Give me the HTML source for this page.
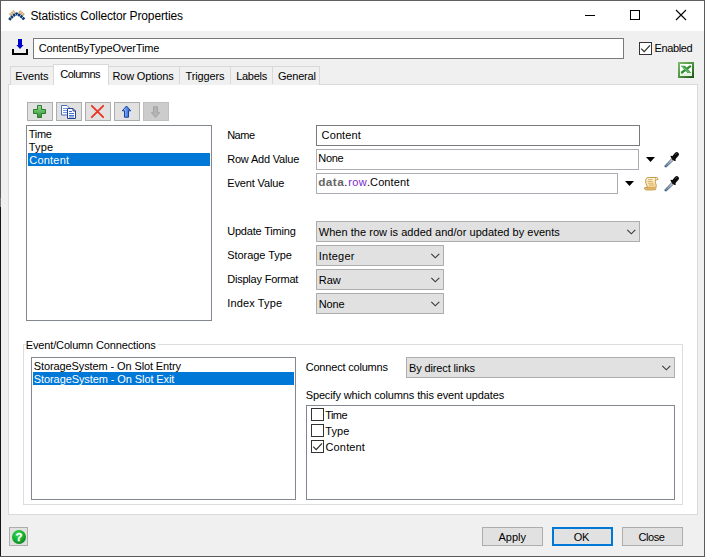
<!DOCTYPE html>
<html><head><meta charset="utf-8"><title>Statistics Collector Properties</title>
<style>
html,body{margin:0;padding:0;}
body{width:705px;height:557px;position:relative;overflow:hidden;background:#f0f0f0;font-family:"Liberation Sans",sans-serif;font-size:11px;color:#000;}
.a{position:absolute;box-sizing:border-box;}
svg{position:absolute;overflow:visible;}
.t{position:absolute;white-space:nowrap;line-height:14px;height:14px;}
.btn{position:absolute;box-sizing:border-box;border:1px solid #adadad;background:#e1e1e1;}
.inp{position:absolute;box-sizing:border-box;border:1px solid #7a7a7a;background:#fff;}
.cmb{position:absolute;box-sizing:border-box;border:1px solid #adadad;background:#e1e1e1;height:21px;}
.cb{position:absolute;box-sizing:border-box;width:13px;height:13px;border:1px solid #333;background:#fff;}
</style></head><body>
<!-- window frame -->
<div class="a" id="titlebar" style="left:1px;top:1px;width:703px;height:30px;background:#fff;"></div>
<div class="a" style="left:0;top:0;width:705px;height:1px;background:#606060;"></div>
<div class="a" style="left:0;top:0;width:1px;height:557px;background:linear-gradient(to bottom,#5a5a5a 0,#5a5a5a 198px,#7a7a7a 198px,#7a7a7a 207px,#161616 207px,#161616 557px);"></div>
<div class="a" style="left:704px;top:0;width:1px;height:557px;background:#5a5a5a;"></div>
<div class="a" style="left:0;top:556px;width:705px;height:1px;background:#5a5a5a;"></div>

<!-- app icon -->
<svg style="left:8px;top:9.7px;" width="18" height="12" viewBox="0 0 18 12">
 <path d="M2 5.2 L6.4 1.2 M15.8 5.2 L11.2 1.2" stroke="#cfab78" stroke-width="3.2" stroke-dasharray="1.8 0.5" fill="none"/>
 <path d="M1.3 9.9 Q4.6 5.6 8.7 3.8 Q12.9 5.6 16.5 9.7" stroke="#0b3a72" stroke-width="2.8" stroke-dasharray="2.3 0.5" fill="none" stroke-linejoin="miter"/>
</svg>
<span class="t" id="title" style="left:30.5px;top:9px;font-size:12px;letter-spacing:-0.14px;">Statistics Collector Properties</span>
<!-- window controls -->
<div class="a" style="left:585px;top:15px;width:10px;height:1px;background:#000;"></div>
<div class="a" style="left:630px;top:10px;width:10px;height:10px;border:1px solid #000;"></div>
<svg style="left:676px;top:10px;" width="10" height="10" viewBox="0 0 10 10"><path d="M0 0 L10 10 M10 0 L0 10" stroke="#000" stroke-width="1.1" fill="none"/></svg>

<!-- name row -->
<svg style="left:12px;top:38px;" width="17" height="18" viewBox="0 0 17 18">
 <path d="M1 11 V16 H15 V11" stroke="#000" stroke-width="2" fill="none"/>
 <path d="M6 1 H10 V7 H11.6 L8 11 L4.4 7 H6 Z" fill="#0000c8"/>
</svg>
<div class="inp" style="left:33px;top:38px;width:591px;height:21px;"></div>
<span class="t" id="cname" style="left:38.8px;top:41px;letter-spacing:-0.12px;">ContentByTypeOverTime</span>
<div class="cb" style="left:639px;top:42px;"></div>
<svg style="left:639px;top:42px;" width="13" height="13" viewBox="0 0 13 13"><path d="M2.2 6.6 L5.2 9.6 L11 3.4" stroke="#2a2a2a" stroke-width="1.15" fill="none"/></svg>
<span class="t" id="enabled" style="left:654.5px;top:41px;letter-spacing:-0.38px;">Enabled</span>
<!-- excel icon -->
<svg style="left:678px;top:62px;" width="16" height="16" viewBox="0 0 16 16">
 <defs><linearGradient id="gx" x1="0" y1="0" x2="1" y2="1"><stop offset="0" stop-color="#7fb86a"/><stop offset="0.5" stop-color="#4c9440"/><stop offset="1" stop-color="#1f5a1c"/></linearGradient></defs>
 <rect x="1" y="1" width="14" height="14" fill="#fff" stroke="url(#gx)" stroke-width="2"/>
 <rect x="2.2" y="11.4" width="11.6" height="2.2" fill="#dff0da"/>
 <path d="M12.8 3.8 L3.2 11" stroke="#2f8a32" stroke-width="2.2" fill="none"/>
 <path d="M2.8 3.8 L7 3.8 L13.4 11 L9.4 11 Z" fill="#3fa045"/>
 <path d="M3.6 4.2 L11.6 10.8" stroke="#8fd08f" stroke-width="0.7" fill="none"/>
</svg>

<!-- tabs -->
<div class="a" style="left:8px;top:84px;width:690px;height:431px;background:#fff;border:1px solid #dadada;"></div>
<div class="a" style="left:10px;top:66px;width:310px;height:19px;background:#f0f0f0;border:1px solid #d9d9d9;border-bottom:none;"></div>
<div class="a" style="left:179px;top:67px;width:1px;height:17px;background:#d9d9d9;"></div>
<div class="a" style="left:230px;top:67px;width:1px;height:17px;background:#d9d9d9;"></div>
<div class="a" style="left:272px;top:67px;width:1px;height:17px;background:#d9d9d9;"></div>
<div class="a" style="left:53px;top:64px;width:56px;height:21px;background:#fff;border:1px solid #d9d9d9;border-bottom:none;"></div>
<span class="t" id="tab1" style="left:15.2px;top:69px;letter-spacing:-0.06px;">Events</span>
<span class="t" id="tab2" style="left:60.2px;top:67px;letter-spacing:-0.5px;">Columns</span>
<span class="t" id="tab3" style="left:112.5px;top:69px;letter-spacing:-0.18px;">Row Options</span>
<span class="t" id="tab4" style="left:185.5px;top:69px;letter-spacing:-0.12px;">Triggers</span>
<span class="t" id="tab5" style="left:236.2px;top:69px;letter-spacing:-0.28px;">Labels</span>
<span class="t" id="tab6" style="left:278px;top:69px;letter-spacing:-0.2px;">General</span>

<!-- toolbar buttons -->
<div class="btn" style="left:27px;top:102px;width:26px;height:19px;"></div>
<svg style="left:33px;top:105px;" width="14" height="14" viewBox="0 0 14 14">
 <defs><linearGradient id="gp" x1="0" y1="0" x2="0" y2="1"><stop offset="0" stop-color="#a4dba0"/><stop offset="0.5" stop-color="#5cb85c"/><stop offset="1" stop-color="#2f8f36"/></linearGradient></defs>
 <path d="M4.5 0.5 H8.5 V4.5 H12.5 V8.5 H8.5 V12.5 H4.5 V8.5 H0.5 V4.5 H4.5 Z" fill="url(#gp)" stroke="#2c7a30" stroke-width="1" stroke-linejoin="round"/>
</svg>
<div class="btn" style="left:56px;top:102px;width:26px;height:19px;"></div>
<svg style="left:61px;top:105px;" width="16" height="14" viewBox="0 0 16 14">
 <path d="M0.5 0.5 H6 L8.5 3 V10 H0.5 Z" fill="#fff" stroke="#4a6fb5"/>
 <path d="M2 3.5 H6 M2 5.5 H7 M2 7.5 H7" stroke="#6f9be0" stroke-width="1"/>
 <path d="M6.5 3.5 H12 L14.5 6 V13.5 H6.5 Z" fill="#fff" stroke="#27408b"/>
 <path d="M12 3.5 V6 H14.5" fill="none" stroke="#27408b"/>
 <path d="M8 6.5 H11 M8 8.5 H13 M8 10.5 H13 M8 12 H13" stroke="#3f6fd0" stroke-width="1"/>
</svg>
<div class="btn" style="left:85px;top:102px;width:26px;height:19px;"></div>
<svg style="left:91px;top:105px;" width="13" height="13" viewBox="0 0 13 13">
 <path d="M0.8 0.8 L12.2 12.2 M12.2 0.8 L0.8 12.2" stroke="#ea3320" stroke-width="1.8" stroke-linecap="round" fill="none"/>
</svg>
<div class="btn" style="left:114px;top:102px;width:26px;height:19px;"></div>
<svg style="left:121px;top:105px;" width="11" height="13" viewBox="0 0 11 13">
 <defs><linearGradient id="gu" x1="0" y1="0" x2="1" y2="0"><stop offset="0" stop-color="#c4dcff"/><stop offset="0.5" stop-color="#5b90ee"/><stop offset="1" stop-color="#1f55c8"/></linearGradient></defs>
 <path d="M5.5 1 L9.7 5.8 H7.5 V12.2 H3.5 V5.8 H1.3 Z" fill="url(#gu)" stroke="#1a3f9a" stroke-width="1"/>
</svg>
<div class="btn" style="left:143px;top:102px;width:26px;height:19px;background:#cccccc;border-color:#bfbfbf;"></div>
<svg style="left:150px;top:106px;" width="11" height="12" viewBox="0 0 11 12">
 <path d="M3.5 0.8 H7.5 V6.6 H9.7 L5.5 11.4 L1.3 6.6 H3.5 Z" fill="#b4b4b4" stroke="#a4a4a4" stroke-width="1"/>
</svg>

<!-- list -->
<div class="inp" style="left:26px;top:125px;width:186px;height:196px;border-color:#828790;"></div>
<div class="a" style="left:28px;top:153px;width:182px;height:13px;background:#0078d7;"></div>
<span class="t" id="li1" style="left:28.8px;top:127px;letter-spacing:-0.29px;">Time</span>
<span class="t" id="li2" style="left:28.8px;top:140px;letter-spacing:0.19px;">Type</span>
<span class="t" id="li3" style="left:29.3px;top:153px;color:#fff;letter-spacing:0.2px;">Content</span>

<!-- form -->
<span class="t" id="l1" style="left:227.2px;top:128px;letter-spacing:-0.51px;">Name</span>
<span class="t" id="l2" style="left:227.2px;top:152px;letter-spacing:-0.19px;">Row Add Value</span>
<span class="t" id="l3" style="left:227.2px;top:176px;letter-spacing:-0.13px;">Event Value</span>
<span class="t" id="l4" style="left:227.2px;top:224px;letter-spacing:-0.19px;">Update Timing</span>
<span class="t" id="l5" style="left:227.2px;top:248px;letter-spacing:-0.04px;">Storage Type</span>
<span class="t" id="l6" style="left:227.2px;top:272px;letter-spacing:-0.21px;">Display Format</span>
<span class="t" id="l7" style="left:227.2px;top:296px;letter-spacing:0.15px;">Index Type</span>

<div class="inp" style="left:316px;top:125px;width:324px;height:21px;"></div>
<span class="t" id="v1" style="left:321.6px;top:128px;letter-spacing:0.11px;">Content</span>
<div class="inp" style="left:316px;top:149px;width:323px;height:21px;border-color:#abadb3;"></div>
<span class="t" id="v2" style="left:318.2px;top:151px;letter-spacing:-0.25px;">None</span>
<div class="inp" style="left:316px;top:173px;width:302px;height:21px;border-color:#abadb3;"></div>
<span class="t" id="v3" style="left:318.2px;top:175px;letter-spacing:0.1px;"><b style="color:#666;font-size:11.8px;letter-spacing:0.45px;">data</b><span style="letter-spacing:1px">.</span><span style="color:#7d26cd;letter-spacing:0.3px;">row</span>.Content</span>

<!-- dropdown triangles -->
<svg style="left:646px;top:157px;" width="9" height="5" viewBox="0 0 9 5"><path d="M0 0 H9 L4.5 5 Z" fill="#000"/></svg>
<svg style="left:625px;top:181px;" width="9" height="5" viewBox="0 0 9 5"><path d="M0 0 H9 L4.5 5 Z" fill="#000"/></svg>
<!-- eyedroppers -->
<svg id="eye1" style="left:664px;top:152px;" width="16" height="16" viewBox="0 0 16 16">
 <defs><linearGradient id="gt" x1="0" y1="1" x2="1" y2="0"><stop offset="0" stop-color="#2f6fc8"/><stop offset="0.45" stop-color="#8fa8c4"/><stop offset="1" stop-color="#dfe4ea"/></linearGradient></defs>
 <path d="M0.8 14.8 L1.2 13.4 L7.8 6.5 L9.5 8.2 L2.4 14.9 Z" fill="url(#gt)" stroke="#3a4550" stroke-width="0.7"/>
 <path d="M7.5 4.7 L10.9 8.1" stroke="#0c0c0c" stroke-width="1.9" stroke-linecap="round"/>
 <path d="M9.7 5.9 L12.8 2.3" stroke="#0c0c0c" stroke-width="4.4" stroke-linecap="round"/>
 <path d="M11.6 2.2 L12.6 1.4" stroke="#555" stroke-width="0.8" stroke-linecap="round"/>
</svg>
<svg id="eye2" style="left:664px;top:176px;" width="16" height="16" viewBox="0 0 16 16">
 <path d="M0.8 14.8 L1.2 13.4 L7.8 6.5 L9.5 8.2 L2.4 14.9 Z" fill="url(#gt)" stroke="#3a4550" stroke-width="0.7"/>
 <path d="M7.5 4.7 L10.9 8.1" stroke="#0c0c0c" stroke-width="1.9" stroke-linecap="round"/>
 <path d="M9.7 5.9 L12.8 2.3" stroke="#0c0c0c" stroke-width="4.4" stroke-linecap="round"/>
 <path d="M11.6 2.2 L12.6 1.4" stroke="#555" stroke-width="0.8" stroke-linecap="round"/>
</svg>
<!-- scroll icon -->
<svg id="scroll" style="left:644px;top:177px;" width="15" height="14" viewBox="0 0 15 14">
 <defs><linearGradient id="gs" x1="0" y1="0" x2="0" y2="1"><stop offset="0" stop-color="#fff8e0"/><stop offset="0.6" stop-color="#fbe3ad"/><stop offset="1" stop-color="#f4c878"/></linearGradient></defs>
 <path d="M3.2 0.5 H12.6 Q14.3 0.7 13.9 2.3 Q13.2 3.4 11.6 2.8 Q10.6 4.6 11.8 6.8 Q12.8 8.8 11.9 10.6 L11.6 12.6 Q8 13.3 1.6 12.9 Q0 12.2 0.6 10.7 L3.3 10.4 Q2.9 8.4 1.9 6.4 Q0.6 2.6 3.2 0.5 Z" fill="url(#gs)" stroke="#c0903e" stroke-width="0.9"/>
 <path d="M12 0.8 Q11.4 1.6 11.6 2.8" stroke="#c0903e" stroke-width="0.7" fill="none"/>
 <path d="M3.3 10.4 H11.4" stroke="#c0903e" stroke-width="0.7" fill="none"/>
 <path d="M4 2.6 H8.6 M3.4 4.4 H8.6 M4 6.2 H9.6 M5 8 H10.4 M1.6 11.7 H10.2" stroke="#d2aa62" stroke-width="0.9" fill="none"/>
</svg>

<div class="cmb" style="left:316px;top:221px;width:324px;"></div>
<span class="t" id="c1" style="left:318.8px;top:225px;letter-spacing:0.03px;">When the row is added and/or updated by events</span>
<div class="cmb" style="left:316px;top:245px;width:128px;"></div>
<span class="t" id="c2" style="left:318.8px;top:249px;letter-spacing:0.24px;">Integer</span>
<div class="cmb" style="left:316px;top:269px;width:128px;"></div>
<span class="t" id="c3" style="left:318.8px;top:273px;">Raw</span>
<div class="cmb" style="left:316px;top:293px;width:128px;"></div>
<span class="t" id="c4" style="left:318.8px;top:297px;letter-spacing:-0.15px;">None</span>
<svg style="left:627px;top:229px;" width="9" height="5" viewBox="0 0 9 5"><path d="M0.3 0.8 L4.3 4.8 L8.3 0.8" stroke="#3a3a3a" stroke-width="1.15" fill="none"/></svg>
<svg style="left:431px;top:253px;" width="9" height="5" viewBox="0 0 9 5"><path d="M0.3 0.8 L4.3 4.8 L8.3 0.8" stroke="#3a3a3a" stroke-width="1.15" fill="none"/></svg>
<svg style="left:431px;top:277px;" width="9" height="5" viewBox="0 0 9 5"><path d="M0.3 0.8 L4.3 4.8 L8.3 0.8" stroke="#3a3a3a" stroke-width="1.15" fill="none"/></svg>
<svg style="left:431px;top:301px;" width="9" height="5" viewBox="0 0 9 5"><path d="M0.3 0.8 L4.3 4.8 L8.3 0.8" stroke="#3a3a3a" stroke-width="1.15" fill="none"/></svg>

<!-- group box -->
<div class="a" style="left:23px;top:344px;width:660px;height:161px;border:1px solid #dcdcdc;"></div>
<span class="t" id="g1" style="left:25.8px;top:338px;background:#fff;letter-spacing:-0.15px;padding-right:2px;">Event/Column Connections</span>
<div class="inp" style="left:31px;top:357px;width:265px;height:143px;border-color:#828790;"></div>
<div class="a" style="left:33px;top:372px;width:261px;height:13px;background:#0078d7;"></div>
<span class="t" id="e1" style="left:33.8px;top:359px;letter-spacing:-0.11px;">StorageSystem - On Slot Entry</span>
<span class="t" id="e2" style="left:33.8px;top:372px;color:#fff;letter-spacing:-0.09px;">StorageSystem - On Slot Exit</span>

<span class="t" id="cc" style="left:305.7px;top:360px;letter-spacing:-0.19px;">Connect columns</span>
<div class="cmb" style="left:406px;top:357px;width:269px;"></div>
<span class="t" id="c5" style="left:409px;top:361px;letter-spacing:-0.13px;">By direct links</span>
<svg style="left:662px;top:365px;" width="9" height="5" viewBox="0 0 9 5"><path d="M0.3 0.8 L4.3 4.8 L8.3 0.8" stroke="#3a3a3a" stroke-width="1.15" fill="none"/></svg>
<span class="t" id="sp" style="left:305.7px;top:388px;letter-spacing:-0.13px;">Specify which columns this event updates</span>
<div class="inp" style="left:306px;top:405px;width:369px;height:95px;border-color:#828790;"></div>
<div class="cb" style="left:311px;top:408px;"></div>
<div class="cb" style="left:311px;top:424px;"></div>
<div class="cb" style="left:311px;top:440px;"></div>
<svg style="left:311px;top:440px;" width="13" height="13" viewBox="0 0 13 13"><path d="M2.2 6.6 L5.2 9.6 L11 3.4" stroke="#2a2a2a" stroke-width="1.15" fill="none"/></svg>
<span class="t" id="k1" style="left:325.2px;top:408px;letter-spacing:-0.56px;">Time</span>
<span class="t" id="k2" style="left:325.2px;top:424px;letter-spacing:0.09px;">Type</span>
<span class="t" id="k3" style="left:325.5px;top:440px;letter-spacing:0.15px;">Content</span>

<!-- bottom buttons -->
<div class="btn" style="left:9px;top:527px;width:19px;height:19px;"></div>
<svg style="left:12px;top:530px;" width="14" height="14" viewBox="0 0 14 14">
 <defs><radialGradient id="gh" cx="0.4" cy="0.3" r="0.8"><stop offset="0" stop-color="#2fd84a"/><stop offset="0.6" stop-color="#12aa2c"/><stop offset="1" stop-color="#0a7a1c"/></radialGradient></defs>
 <circle cx="7" cy="7" r="7" fill="url(#gh)"/>
 <text x="7" y="11" text-anchor="middle" font-family="Liberation Sans, sans-serif" font-weight="bold" font-size="11.5" fill="#fff" stroke="#fff" stroke-width="0.35">?</text>
</svg>
<div class="btn" style="left:482px;top:527px;width:61px;height:19px;"></div>
<span class="t" id="b1" style="left:498.5px;top:530px;">Apply</span>
<div class="btn" style="left:552px;top:527px;width:61px;height:19px;border:2px solid #0078d7;"></div>
<span class="t" id="b2" style="left:573.8px;top:530px;letter-spacing:-0.45px;">OK</span>
<div class="btn" style="left:622px;top:527px;width:61px;height:19px;"></div>
<span class="t" id="b3" style="left:638.5px;top:530px;letter-spacing:-0.42px;">Close</span>
</body></html>
